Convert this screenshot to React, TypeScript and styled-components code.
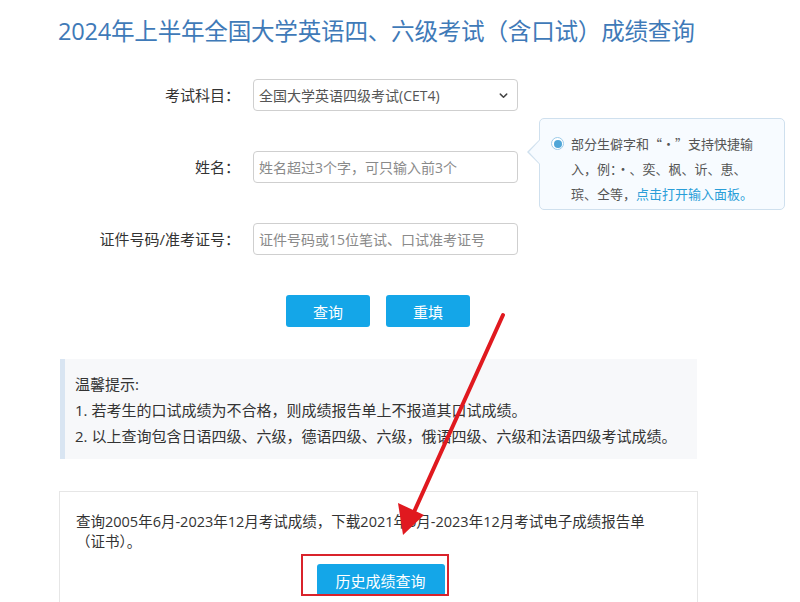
import React from "react";
import styled, { createGlobalStyle } from "styled-components";

const GlobalStyle = createGlobalStyle`
  html, body { margin: 0; padding: 0; background: #fff; }
  body {
    font-family: "Open Sans", "Noto Sans CJK SC", sans-serif;
    color: #333;
  }
  * { box-sizing: border-box; }
`;

const Page = styled.div`
  position: relative;
  width: 800px;
  height: 602px;
  overflow: hidden;
`;

const Container = styled.div`
  width: 640px;
  margin-left: 58px;
  padding-top: 15px;
  display: flex;
  flex-direction: column;
`;

const Title = styled.h1`
  margin: 0;
  font-size: 23.6px;
  line-height: 32px;
  font-weight: 400;
  color: #3f7ab8;
  white-space: nowrap;
  letter-spacing: -0.25px;
`;

const Form = styled.div`
  margin-top: 32px;
  display: grid;
  grid-template-columns: 182px 265px;
  column-gap: 13px;
  row-gap: 40px;
  align-items: center;
`;

const Label = styled.label`
  font-size: 15px;
  line-height: 20px;
  color: #333;
  text-align: right;
  white-space: nowrap;
`;

const FieldWrap = styled.div`
  position: relative;
  height: 32px;
`;

const Field = styled.div<{ $placeholder?: boolean }>`
  height: 32px;
  border: 1px solid #cfcfcf;
  border-radius: 4px;
  display: flex;
  align-items: center;
  justify-content: space-between;
  padding: 0 8px 0 5px;
  font-size: 14px;
  color: ${(p) => (p.$placeholder ? "#8a8a8a" : "#555")};
  background: #fff;
  white-space: nowrap;
`;

const Popover = styled.div`
  position: absolute;
  left: 286px;
  top: -33px;
  width: 246px;
  height: 92px;
  border: 1px solid #cfe0ee;
  border-radius: 5px;
  background: #f7fbff;
  padding: 13px 10px 0 11px;
  display: flex;
  gap: 7px;
  &::before, &::after {
    content: "";
    position: absolute;
    top: 20px;
    width: 0;
    height: 0;
    border-style: solid;
  }
  &::before {
    left: -13px;
    border-width: 13px 13px 13px 0;
    border-color: transparent #cfe0ee transparent transparent;
  }
  &::after {
    left: -11px;
    border-width: 13px 12px 13px 0;
    border-color: transparent #f7fbff transparent transparent;
  }
`;

const PopText = styled.div`
  font-family: "Noto Sans CJK SC", sans-serif;
  font-size: 13px;
  line-height: 25px;
  color: #555;
  white-space: nowrap;
  margin-top: -1px;
`;

const PopLink = styled.span`
  color: #2a9ed8;
`;

const RadioIcon = styled.span`
  flex: none;
  margin-top: 5px;
  width: 13px;
  height: 13px;
  border-radius: 50%;
  border: 1px solid #9ccbe9;
  background: #fff;
  display: flex;
  align-items: center;
  justify-content: center;
  &::after {
    content: "";
    width: 8px;
    height: 8px;
    border-radius: 50%;
    background: #4fa6d8;
  }
`;

const ButtonRow = styled.div`
  margin-top: 40px;
  display: flex;
  justify-content: center;
  gap: 16px;
`;

const Button = styled.button<{ $width: number }>`
  width: ${(p) => p.$width}px;
  height: 32px;
  border: none;
  border-radius: 3px;
  background: #14a6e8;
  color: #fff;
  font-family: "Noto Sans CJK SC", sans-serif;
  font-size: 15px;
  padding: 0;
  cursor: pointer;
`;

const Tips = styled.div`
  margin-top: 32px;
  margin-left: 2px;
  width: 637px;
  height: 100px;
  background: #f7f8fa;
  border-left: 5px solid #d9e5f2;
  padding: 12px 10px 0 10px;
  font-size: 15px;
  line-height: 26px;
  color: #333;
  white-space: nowrap;
`;

const History = styled.div`
  margin-top: 32px;
  margin-left: 1px;
  width: 639px;
  height: 130px;
  border: 1px solid #e6e6e6;
  padding: 20px 10px 0 16px;
  display: flex;
  flex-direction: column;
`;

const HistoryText = styled.p`
  margin: 0;
  font-size: 14.5px;
  line-height: 20px;
  color: #333;
  white-space: nowrap;
`;

const HistoryAction = styled.div`
  position: relative;
  margin-top: 12px;
  display: flex;
  justify-content: center;
  padding-right: 2px;
`;

const Highlight = styled.span`
  position: absolute;
  left: 225px;
  top: -10px;
  width: 148px;
  height: 42px;
  border: 2px solid #d9232b;
  pointer-events: none;
`;

const Overlay = styled.svg`
  position: absolute;
  left: 0;
  top: 0;
  pointer-events: none;
`;

const Chevron = () => (
  <svg width="11" height="11" viewBox="0 0 12 12" fill="none">
    <path d="M2.5 4.5 L6 8 L9.5 4.5" stroke="#444" strokeWidth="1.6" strokeLinecap="round" strokeLinejoin="round" />
  </svg>
);

export default function App() {
  return (
    <Page>
      <GlobalStyle />
      <Container>
        <Title>2024年上半年全国大学英语四、六级考试（含口试）成绩查询</Title>
        <Form>
          <Label>考试科目：</Label>
          <FieldWrap>
            <Field>
              <span>全国大学英语四级考试(CET4)</span>
              <Chevron />
            </Field>
          </FieldWrap>
          <Label>姓名：</Label>
          <FieldWrap>
            <Field $placeholder>姓名超过3个字，可只输入前3个</Field>
            <Popover>
              <RadioIcon />
              <PopText>
                部分生僻字和“·”支持快捷输
                <br />
                入，例：·、奕、枫、䜣、恵、
                <br />
                瑸、仝等，<PopLink>点击打开输入面板。</PopLink>
              </PopText>
            </Popover>
          </FieldWrap>
          <Label>证件号码/准考证号：</Label>
          <FieldWrap>
            <Field $placeholder>证件号码或15位笔试、口试准考证号</Field>
          </FieldWrap>
        </Form>
        <ButtonRow>
          <Button $width={84}>查询</Button>
          <Button $width={84}>重填</Button>
        </ButtonRow>
        <Tips>
          温馨提示:
          <br />
          1. 若考生的口试成绩为不合格，则成绩报告单上不报道其口试成绩。
          <br />
          2. 以上查询包含日语四级、六级，德语四级、六级，俄语四级、六级和法语四级考试成绩。
        </Tips>
        <History>
          <HistoryText>
            查询2005年6月-2023年12月考试成绩，下载2021年6月-2023年12月考试电子成绩报告单
            <br />
            （证书）。
          </HistoryText>
          <HistoryAction>
            <Button $width={128}>历史成绩查询</Button>
            <Highlight />
          </HistoryAction>
        </History>
      </Container>
      <Overlay width="800" height="602" viewBox="0 0 800 602">
        <line x1="503" y1="315" x2="414" y2="512" stroke="#e0191f" strokeWidth="4" strokeLinecap="round" />
        <polygon points="403,535 398,503 424,515" fill="#e0191f" />
      </Overlay>
    </Page>
  );
}
